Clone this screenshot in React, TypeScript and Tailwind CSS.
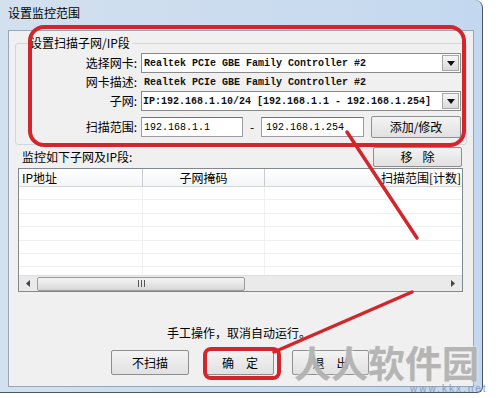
import React from "react";

const cjk = { fontFamily: '"Noto Sans CJK SC", "Liberation Sans", sans-serif' };
const mono = { fontFamily: '"Liberation Mono", "Noto Sans CJK SC", monospace' };

function DropBtn() {
  return (
    <div className="w-[17px] h-[16px] mr-[1px] border border-[#a7a7a7] bg-gradient-to-b from-[#f6f6f6] to-[#dadada] flex items-center justify-center">
      <svg width="8" height="5" viewBox="0 0 8 5">
        <path d="M0 0 L8 0 L4 5 Z" fill="#111" />
      </svg>
    </div>
  );
}

function Btn({ children, className = "" }: { children: React.ReactNode; className?: string }) {
  return (
    <div
      className={
        "flex items-center justify-center border border-[#8e8f8f] rounded-[2px] bg-gradient-to-b from-[#f3f3f3] to-[#e1e1e1] text-[12px] leading-[14px] text-black " +
        className
      }
    >
      {children}
    </div>
  );
}

export default function App() {
  const rows = [0, 1, 2, 3, 4, 5, 6];
  return (
    <div className="relative w-[500px] h-[398px] bg-white overflow-hidden" style={cjk}>
      {/* window */}
      <div className="w-[483px] h-[393px] bg-gradient-to-r from-[#d3e0ee] to-[#c3d8ef] border-r border-b border-[#4c5866] rounded-tr-[8px] rounded-br-[6px] flex flex-col pl-[8px] pr-[8px] pb-[5px]">
        <div className="h-[30px] pb-[4px] flex items-center text-[12px] text-black leading-[14px]">设置监控范围</div>
        <div className="w-[466px] flex-1 bg-[#f0f0f0] border border-[#97a6b8] flex flex-col">
          <fieldset className="mx-[6px] mt-[5px] border border-[#d0d7de] rounded-[3px] pb-[6px]">
            <legend className="ml-[12px] px-[2px] text-[12px] leading-[14px] text-black">设置扫描子网/IP段</legend>
            <div className="flex items-center h-[20px] mt-[3px]">
              <div className="w-[125px] pr-[4px] text-right text-[12px] leading-[14px]">选择网卡:</div>
              <div className="w-[320px] h-[20px] border border-[#8a8a8a] bg-white flex items-center justify-between">
                <span className="pl-[2px] text-[10px] font-bold text-[#111] whitespace-nowrap" style={mono}>
                  Realtek PCIe GBE Family Controller #2
                </span>
                <DropBtn />
              </div>
            </div>
            <div className="flex items-center h-[18px]">
              <div className="w-[125px] pr-[4px] text-right text-[12px] leading-[14px]">网卡描述:</div>
              <span className="pl-[3px] text-[10px] font-bold text-[#111] whitespace-nowrap" style={mono}>
                Realtek PCIe GBE Family Controller #2
              </span>
            </div>
            <div className="flex items-center h-[20px]">
              <div className="w-[125px] pr-[4px] text-right text-[12px] leading-[14px]">子网:</div>
              <div className="w-[320px] h-[20px] border border-[#8a8a8a] bg-white flex items-center justify-between">
                <span className="pl-[1px] text-[10px] font-bold text-[#111] whitespace-nowrap" style={mono}>
                  IP:192.168.1.10/24 [192.168.1.1 - 192.168.1.254]
                </span>
                <DropBtn />
              </div>
            </div>
            <div className="flex items-center h-[22px] mt-[5px]">
              <div className="w-[125px] pr-[4px] text-right text-[12px] leading-[14px]">扫描范围:</div>
              <div className="w-[102px] h-[20px] border border-[#9a9ca2] border-t-[#707378] bg-white flex items-center">
                <span className="pl-[2px] text-[10px] text-black" style={mono}>192.168.1.1</span>
              </div>
              <div className="w-[18px] text-center text-[12px] leading-[14px]">-</div>
              <div className="w-[103px] h-[20px] border border-[#9a9ca2] border-t-[#707378] bg-white flex items-center">
                <span className="pl-[4px] text-[10px] text-black" style={mono}>192.168.1.254</span>
              </div>
              <Btn className="ml-[7px] w-[90px] h-[22px]">添加/修改</Btn>
            </div>
          </fieldset>

          <div className="flex items-center justify-between h-[20px] mt-[2px]">
            <div className="pl-[13px] text-[12px] leading-[14px]">监控如下子网及IP段:</div>
            <Btn className="mr-[11px] w-[89px] h-[20px]">
              <span className="tracking-[10px] pl-[10px]">移除</span>
            </Btn>
          </div>

          {/* list view */}
          <div className="ml-[9px] mt-[1px] w-[445px] h-[124px] border border-[#828790] bg-white flex flex-col overflow-hidden">
            <div className="h-[18px] flex border-b border-[#d5d5d5] bg-gradient-to-b from-white to-[#f4f5f7] text-[12px] leading-[14px]">
              <div className="w-[124px] border-r border-[#c9cdd3] pl-[3px] flex items-center">IP地址</div>
              <div className="w-[122px] border-r border-[#c9cdd3] flex items-center justify-center">子网掩码</div>
              <div className="flex-1 flex items-center justify-end pr-[1px]">扫描范围[计数]</div>
            </div>
            <div className="flex-1 flex flex-col overflow-hidden">
              {rows.map((r) => (
                <div key={r} className="h-[13.4px] shrink-0 flex border-b border-[#eef0f2]">
                  <div className="w-[124px] border-r border-[#eef0f2]" />
                  <div className="w-[122px] border-r border-[#eef0f2]" />
                  <div className="flex-1" />
                </div>
              ))}
            </div>
            <div className="h-[16px] bg-[#eaeaea] border-t border-[#e0e0e0] flex items-center">
              <div className="w-[18px] flex items-center justify-center">
                <svg width="4" height="7" viewBox="0 0 4 7">
                  <path d="M4 0 L0 3.5 L4 7 Z" fill="#444" />
                </svg>
              </div>
              <div className="w-[208px] h-[14px] rounded-[2px] border border-[#9b9b9b] bg-gradient-to-b from-[#f4f4f4] to-[#d8d8d8] flex items-center justify-center">
                <svg width="7" height="7" viewBox="0 0 7 7">
                  <path d="M0.5 0 V7 M3.5 0 V7 M6.5 0 V7" stroke="#555" strokeWidth="1" />
                </svg>
              </div>
              <div className="flex-1" />
              <div className="w-[18px] flex items-center justify-center">
                <svg width="4" height="7" viewBox="0 0 4 7">
                  <path d="M0 0 L4 3.5 L0 7 Z" fill="#444" />
                </svg>
              </div>
            </div>
          </div>

          <div className="mt-[33px] pl-[158px] text-[12px] leading-[16px] text-black">手工操作，取消自动运行。</div>
          <div className="mt-[9px] flex pl-[102px]">
            <Btn className="w-[78px] h-[25px]">不扫描</Btn>
            <Btn className="ml-[17px] w-[68px] h-[25px]">
              <span className="tracking-[12px] pl-[12px]">确定</span>
            </Btn>
            <Btn className="ml-[18px] w-[77px] h-[25px]">
              <span className="tracking-[12px] pl-[12px]">退出</span>
            </Btn>
          </div>
        </div>
      </div>

      {/* red annotations */}
      <div className="absolute left-[28px] top-[25px] w-[438px] h-[122px] border-4 border-[#d3262c] rounded-[16px] pointer-events-none" />
      <div className="absolute left-[203px] top-[347px] w-[78px] h-[33px] border-4 border-[#d3262c] rounded-[8px] pointer-events-none" />
      <svg className="absolute left-0 top-0 pointer-events-none" width="500" height="398" viewBox="0 0 500 398">
        <line x1="347" y1="132" x2="417" y2="238" stroke="#d3262c" strokeWidth="3.5" strokeLinecap="round" />
        <line x1="274" y1="352" x2="412" y2="292" stroke="#d3262c" strokeWidth="3.5" strokeLinecap="round" />
      </svg>

      {/* watermark */}
      <div
        className="absolute left-[294px] top-[340px] text-[37px] leading-[44px] font-bold text-[rgba(175,175,175,0.5)] pointer-events-none whitespace-nowrap"
        style={{ ...cjk, textShadow: "0 0 1px rgba(120,120,120,0.5), 0 0 3px #fff" }}
      >
        人人软件园
      </div>
      <div
        className="absolute left-[410px] top-[383px] text-[10px] leading-[12px] tracking-[2px] text-[#8a9cba] pointer-events-none"
        style={{ fontFamily: '"Liberation Sans", sans-serif' }}
      >
        www.kkx.net
      </div>
    </div>
  );
}
